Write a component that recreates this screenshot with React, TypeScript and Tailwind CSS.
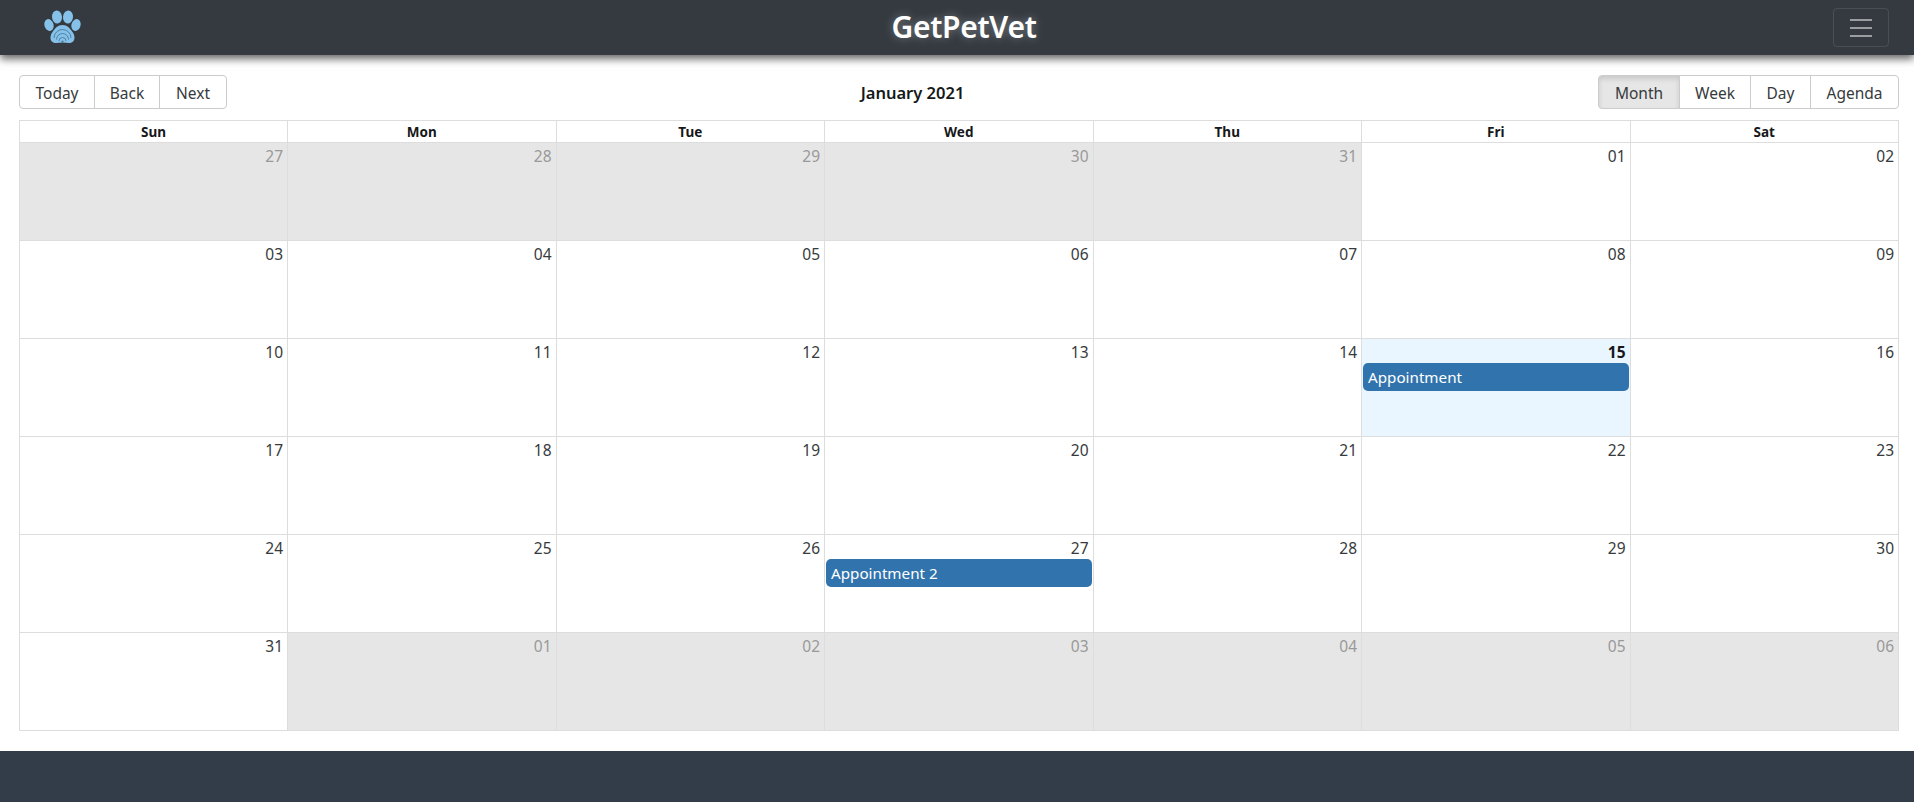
import React from "react";

const font = { fontFamily: '"Noto Sans", "Open Sans", sans-serif' };

type Cell = { d: string; off?: boolean; today?: boolean; ev?: string };

const off = (d: string): Cell => ({ d, off: true });
const on = (d: string, extra: Partial<Cell> = {}): Cell => ({ d, ...extra });

const weeks: Cell[][] = [
  [off("27"), off("28"), off("29"), off("30"), off("31"), on("01"), on("02")],
  [on("03"), on("04"), on("05"), on("06"), on("07"), on("08"), on("09")],
  [on("10"), on("11"), on("12"), on("13"), on("14"), on("15", { today: true, ev: "Appointment" }), on("16")],
  [on("17"), on("18"), on("19"), on("20"), on("21"), on("22"), on("23")],
  [on("24"), on("25"), on("26"), on("27", { ev: "Appointment 2" }), on("28"), on("29"), on("30")],
  [on("31"), off("01"), off("02"), off("03"), off("04"), off("05"), off("06")],
];

const days = ["Sun", "Mon", "Tue", "Wed", "Thu", "Fri", "Sat"];

function Paw() {
  return (
    <svg width="38" height="36" viewBox="0 0 38 36" fill="none">
      <ellipse cx="6" cy="15" rx="4.5" ry="6" fill="#85c1e9" transform="rotate(-18 6 15)" />
      <ellipse cx="14" cy="7" rx="5" ry="6.5" fill="#85c1e9" transform="rotate(-6 14 7)" />
      <ellipse cx="25" cy="7" rx="5" ry="6.5" fill="#85c1e9" transform="rotate(6 25 7)" />
      <ellipse cx="33" cy="15" rx="4.5" ry="6" fill="#85c1e9" transform="rotate(18 33 15)" />
      <path
        d="M19.5 15c-5 0-7 3-10 7-3 4-3 10 2.500 11 2.500.4 5-.5 7.500-.5s5 .9 7.500.5c5.500-1 5.500-7 2.500-11-3-4-5-7-10-7z"
        fill="#85c1e9"
      />
      <g stroke="#4a7a9c" strokeWidth="0.900" fill="none">
        <path d="M11 28a8.500 8.500 0 0 1 17 0" />
        <path d="M13.500 29.500a6 6 0 0 1 12 0" />
        <path d="M16 31a3.500 3.500 0 0 1 7 0" />
      </g>
      <circle cx="19.500" cy="31.500" r="1.100" fill="#4a7a9c" />
    </svg>
  );
}

function ToolButton({
  label,
  className,
  active,
}: {
  label: string;
  className: string;
  active?: boolean;
}) {
  return (
    <button
      className={
        "h-[34px] border border-[#cccccc] text-[15.500px] leading-none text-[#373a3c] flex items-center justify-center pt-[3px] " +
        (active ? "bg-[#e6e6e6] border-[#adadad] shadow-[inset_0_3px_5px_rgba(0,0,0,0.125)] " : "bg-white ") +
        className
      }
    >
      {label}
    </button>
  );
}

export default function App() {
  return (
    <div className="h-[802px] flex flex-col bg-white overflow-hidden" style={font}>
      <header className="h-[55px] shrink-0 bg-[#343a40] flex items-center pl-[43px] pr-[25px] relative shadow-[0_4px_8px_rgba(0,0,0,0.6)] z-10">
        <Paw />
        <h1 className="flex-1 pl-[14px] text-center text-[30px] leading-[53px] pb-[2px] font-semibold tracking-[-0.3px] text-white [text-shadow:0_0_10px_rgba(255,255,255,0.35)]">
          GetPetVet
        </h1>
        <button className="w-[56px] h-[39px] border border-[rgba(255,255,255,0.1)] rounded flex items-center justify-center">
          <svg width="30" height="30" viewBox="0 0 30 30">
            <path d="M4 7h22M4 15h22M4 23h22" stroke="rgba(255,255,255,0.5)" strokeWidth="2" />
          </svg>
        </button>
      </header>

      <main className="flex-1 flex flex-col pl-[19px] pr-[15px] pt-[20px] pb-[20px] min-h-0">
        <div className="flex items-center mb-[11px]">
          <div className="flex">
            <ToolButton label="Today" className="w-[76px] rounded-l-[4px]" />
            <ToolButton label="Back" className="w-[66px] -ml-px" />
            <ToolButton label="Next" className="w-[68px] -ml-px rounded-r-[4px]" />
          </div>
          <div className="flex-1 text-center text-[16.500px] pt-[3px] font-semibold text-[#16181a]">
            January 2021
          </div>
          <div className="flex">
            <ToolButton label="Month" active className="w-[82px] rounded-l-[4px]" />
            <ToolButton label="Week" className="w-[72px] -ml-px" />
            <ToolButton label="Day" className="w-[61px] -ml-px" />
            <ToolButton label="Agenda" className="w-[89px] -ml-px rounded-r-[4px]" />
          </div>
        </div>

        <div className="flex-1 flex flex-col border border-[#dddddd] min-h-0">
          <div className="grid grid-cols-[267px_repeat(6,1fr)] h-[22px] shrink-0 border-b border-[#dddddd]">
            {days.map((d, i) => (
              <div
                key={d}
                className={
                  "text-center text-[13.500px] leading-[22px] font-bold text-[#16181a] " +
                  (i > 0 ? "border-l border-[#dddddd]" : "")
                }
              >
                {d}
              </div>
            ))}
          </div>
          {weeks.map((w, r) => (
            <div
              key={r}
              className={"grid grid-cols-[267px_repeat(6,1fr)] flex-1 " + (r > 0 ? "border-t border-[#dddddd]" : "")}
            >
              {w.map((c, i) => (
                <div
                  key={i}
                  className={
                    "flex flex-col min-w-0 " +
                    (i > 0 ? "border-l border-[#dddddd] " : "") +
                    (c.off ? "bg-[#e6e6e6] " : c.today ? "bg-[#eaf6ff] " : "bg-white ")
                  }
                >
                  <div
                    className={
                      "h-[24px] pr-[4px] text-right text-[15.500px] leading-[26px] " +
                      (c.off ? "text-[#999999] " : "text-[#373a3c] ") +
                      (c.today ? "font-bold text-[#16181a]" : "")
                    }
                  >
                    {c.d}
                  </div>
                  {c.ev && (
                    <div className="h-[28px] bg-[#3174ad] rounded-[5px] text-white text-[15.200px] leading-[28px] px-[5px] mx-px">
                      {c.ev}
                    </div>
                  )}
                </div>
              ))}
            </div>
          ))}
        </div>
      </main>

      <footer className="h-[51px] shrink-0 bg-[#323d49]" />
    </div>
  );
}
